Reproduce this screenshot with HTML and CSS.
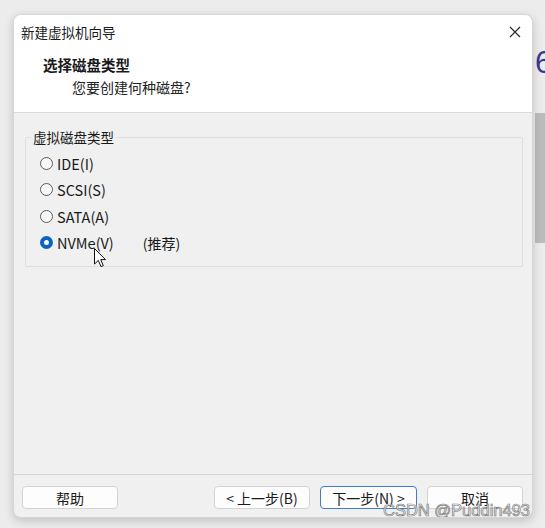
FILE: index.html
```html
<!DOCTYPE html>
<html lang="zh-CN">
<head>
    <meta charset="UTF-8">
    <title>新建虚拟机向导</title>
    <link rel="stylesheet" href="styles.css">
</head>
<body>
    <div class="window">
        <div class="titlebar">
            <span class="title">新建虚拟机向导</span>
            <svg class="close" width="12" height="12" viewBox="0 0 12 12">
                <path d="M1 1 L11 11 M11 1 L1 11" stroke="#2b2b2b" stroke-width="1.2" fill="none"/>
            </svg>
        </div>
        <div class="header">
            <div class="heading">选择磁盘类型</div>
            <div class="subheading">您要创建何种磁盘?</div>
        </div>

        <div class="content">
            <fieldset class="group">
                <legend>虚拟磁盘类型</legend>
                <div class="option"><span class="radio"></span><span class="label">IDE(I)</span></div>
                <div class="option"><span class="radio"></span><span class="label">SCSI(S)</span></div>
                <div class="option"><span class="radio"></span><span class="label">SATA(A)</span></div>
                <div class="option"><span class="radio checked"></span><span class="label">NVMe(V)</span><span class="hint">(推荐)</span></div>
            </fieldset>
        </div>

        <div class="footer">
            <button class="btn">帮助</button>
            <div class="spacer"></div>
            <button class="btn">&lt; 上一步(B)</button>
            <button class="btn focused">下一步(N) &gt;</button>
            <button class="btn">取消</button>
        </div>

        <svg class="cursor" width="13" height="20" viewBox="0 0 13 20">
            <path d="M0.5 0.5 L0.5 16 L4.3 12.4 L7 18.6 L9.3 17.6 L6.7 11.6 L11.5 11.6 Z" fill="#fff" stroke="#111" stroke-width="1"/>
        </svg>
        <div class="watermark">CSDN @Puddin493</div>
    </div>

    <div class="side">
        <span class="glyph">6</span>
        <div class="strip"></div>
    </div>
</body>
</html>
```

FILE: styles.css
```css
body {
    margin: 0;
    width: 545px;
    height: 528px;
    overflow: hidden;
    background-color: #ececec;
    font-family: "Noto Sans CJK SC", "Microsoft YaHei", sans-serif;
    font-size: 14px;
    color: #1a1a1a;
    display: flex;
    align-items: flex-start;
}
.window {
    position: relative;
    margin: 14px 0 0 13px;
    width: 521px;
    height: 504px;
    box-sizing: border-box;
    border: 1px solid #d6d6d6;
    border-radius: 8px;
    background-color: #f0f0f0;
    box-shadow: 0 3px 10px rgba(0, 0, 0, 0.18);
    overflow: hidden;
    display: flex;
    flex-direction: column;
}
.titlebar {
    height: 33px;
    background-color: #fff;
    display: flex;
    align-items: center;
    justify-content: space-between;
    padding: 0 11px 0 7px;
}
.title {
    font-size: 13.5px;
    line-height: 18px;
    padding-top: 1px;
}
.close {
    display: block;
}
.header {
    height: 65px;
    background-color: #fff;
    border-bottom: 1px solid #d9d9d9;
    padding: 7px 0 0 29px;
    box-sizing: border-box;
}
.heading {
    font-weight: bold;
    font-size: 14.5px;
    line-height: 20px;
}
.subheading {
    margin-top: 2px;
    padding-left: 29px;
    font-size: 14px;
    line-height: 20px;
    color: #222;
}
.content {
    flex: 1;
    padding: 15px 9px 0 11px;
}
.group {
    margin: 0;
    padding: 4px 0 10px 5px;
    border: 1px solid #dedede;
    border-radius: 2px;
}
.group legend {
    padding: 0 2px;
    line-height: 18px;
    font-size: 13.5px;
}
.option {
    height: 26.5px;
    display: flex;
    align-items: center;
    padding-left: 9px;
}
.radio {
    width: 13px;
    height: 13px;
    box-sizing: border-box;
    border: 1px solid #5c5c5c;
    border-radius: 50%;
    background-color: #f7f7f7;
}
.radio.checked {
    border: 4px solid #0a64c2;
    background-color: #fff;
}
.label {
    margin-left: 4px;
    font-size: 14.5px;
}
.hint {
    margin-left: 29px;
}
.footer {
    height: 43px;
    box-sizing: border-box;
    border-top: 1px solid #d4d4d4;
    display: flex;
    align-items: flex-start;
    gap: 10px;
    padding: 11px 9px 0 8px;
}
.spacer {
    flex: 1;
}
.btn {
    width: 96px;
    height: 23px;
    box-sizing: border-box;
    margin: 0;
    padding: 0;
    background-color: #fdfdfd;
    border: 1px solid #d3d3d3;
    border-radius: 4px;
    font-family: inherit;
    font-size: 14px;
    color: #1a1a1a;
    line-height: 20px;
}
.btn.focused {
    width: 97px;
    border: 1.5px solid #3d7fc2;
}
.cursor {
    position: absolute;
    left: 80px;
    top: 233px;
}
.watermark {
    position: absolute;
    right: 2px;
    bottom: -3px;
    font-family: "Liberation Sans", Arial, sans-serif;
    font-size: 16.5px;
    color: rgba(255, 255, 255, 0.75);
    -webkit-text-stroke: 0.7px #7a7a7a;
}
.side {
    width: 11px;
    margin-left: 1px;
    overflow: hidden;
    display: flex;
    flex-direction: column;
}
.glyph {
    margin-top: 45px;
    margin-left: 1px;
    font-family: "Liberation Sans", sans-serif;
    font-size: 31px;
    line-height: 36px;
    color: #3a3791;
}
.strip {
    margin-top: 32px;
    height: 130px;
    margin-left: 1px;
    background-color: #bcbcbc;
}
```
